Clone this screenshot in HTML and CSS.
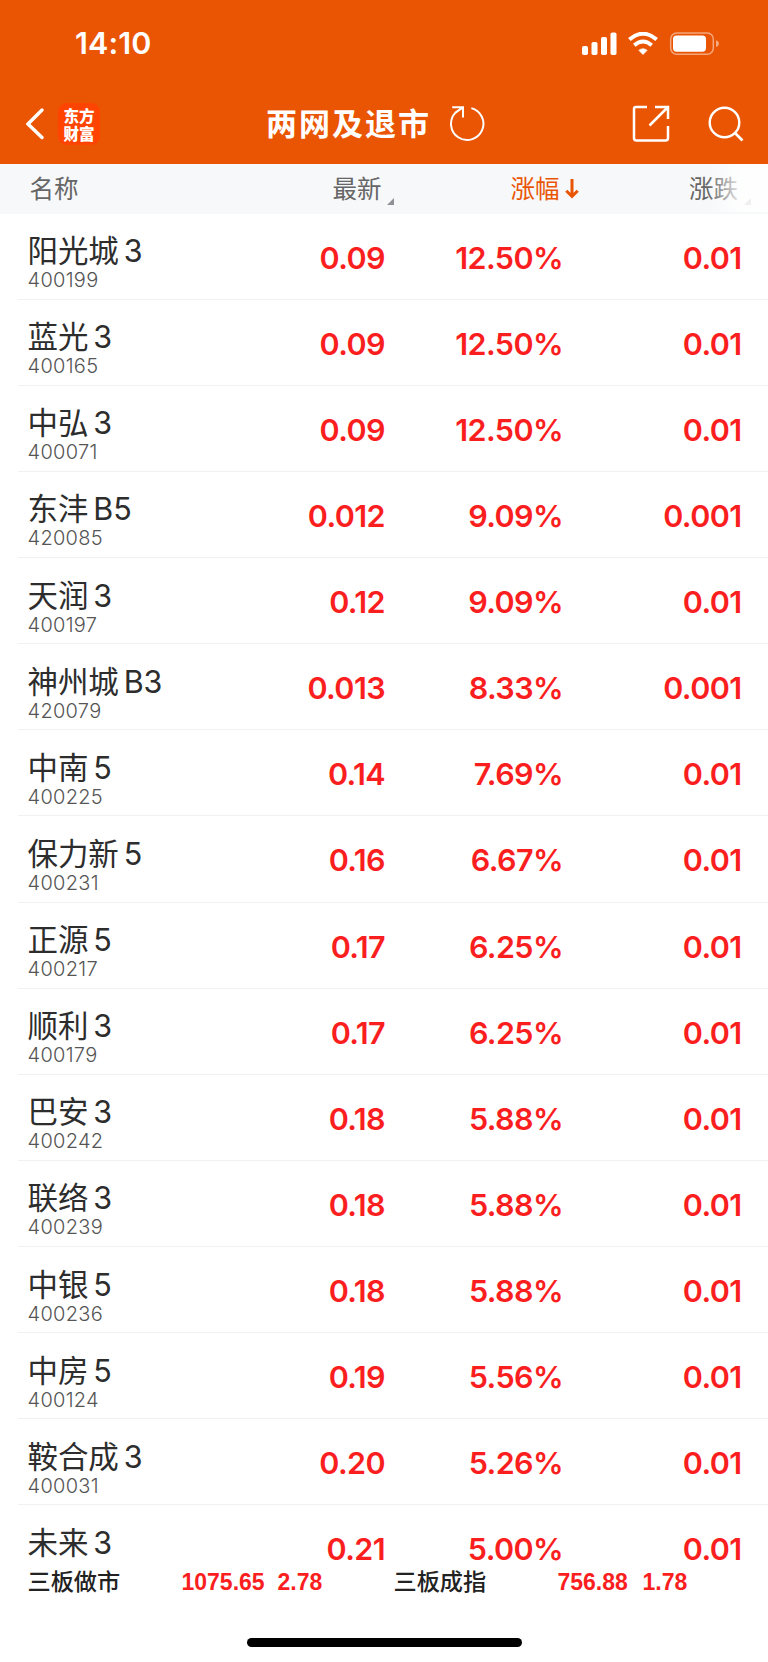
FILE: index.html
```html
<!DOCTYPE html>
<html lang="zh-CN">
<head>
  <meta charset="utf-8">
  <title>两网及退市</title>
  <link rel="stylesheet" href="styles.css">
</head>
<body>
  <div class="phone">
    <header class="top">
      <div class="status-bar">
        <span class="time">14:10</span>
        <svg class="status-icons" width="138" height="24" viewBox="0 0 138 24">
          <g fill="#fff">
            <rect x="0" y="14" width="6" height="9" rx="1.8"/>
            <rect x="9.5" y="10" width="6" height="13" rx="1.8"/>
            <rect x="19" y="5" width="6" height="18" rx="1.8"/>
            <rect x="28.5" y="0.5" width="6" height="22.5" rx="1.8"/>
            <path d="M61 22.600 L56.800 18.300 Q61 15 65.200 18.300 Z" stroke="#fff" stroke-width="0.6"/>
            <rect x="91" y="3.500" width="33" height="16.200" rx="3.600"/>
            <path d="M134 8.300 Q137 9.300 137 11.600 Q137 14 134 15 Z" opacity="0.5"/>
          </g>
          <path d="M47.400 7.600 Q61 -4.200 74.600 7.600" fill="none" stroke="#fff" stroke-width="4"/>
          <path d="M52.300 13.300 Q61 5.800 69.700 13.300" fill="none" stroke="#fff" stroke-width="3.800"/>
          <rect x="88.700" y="0.900" width="42.600" height="21.400" rx="6" fill="none" stroke="#fff" stroke-width="1.500" opacity="0.48"/>
        </svg>
      </div>
      <div class="nav">
        <svg class="back" width="18" height="32" viewBox="0 0 18 32">
          <path d="M16 2 L2 16 L16 29.500" fill="none" stroke="#fff" stroke-width="3.400" stroke-linecap="round"/>
        </svg>
        <div class="logo"><span>东方</span><span>财富</span></div>
        <h1 class="title">两网及退市</h1>
        <svg class="refresh" width="36" height="36" viewBox="0 0 36 36">
          <path d="M22.300 2.100 A16.200 16.200 0 1 1 6.500 6.600 L13.500 1.600 M3.200 1.200 H14 V11.500" fill="none" stroke="#fff" stroke-width="2"/>
        </svg>
        <svg class="share" width="38" height="38" viewBox="0 0 38 38">
          <path d="M15 2 H4 Q2 2 2 4 V33 Q2 35.500 4.500 35.500 H33.500 Q36 35.500 36 33 V21 M23 2 H36 V14 M36 2 L17.500 20.500" fill="none" stroke="#fff" stroke-width="2.500"/>
        </svg>
        <svg class="search" width="36" height="36" viewBox="0 0 36 36">
          <circle cx="16.500" cy="16.500" r="14.800" fill="none" stroke="#fff" stroke-width="2.400"/>
          <path d="M27 27 L34.500 34.500" stroke="#fff" stroke-width="2.600"/>
        </svg>
      </div>
    </header>

    <div class="grid table-head">
      <span class="head-name">名称</span>
      <span class="head-cell">最新<i class="corner"></i></span>
      <span class="head-cell active">涨幅<svg class="arrow" width="14" height="20" viewBox="0 0 14 20"><path d="M7 0 V17 M1.300 11.800 L7 17.500 L12.700 11.800" fill="none" stroke="#ea5504" stroke-width="3"/></svg></span>
      <span class="head-cell">涨跌<i class="corner"></i></span>
      <div class="fade"></div>
    </div>

    <main class="list">
      <div class="grid row"><div class="stock"><b>阳光城 3</b><small>400199</small></div><span>0.09</span><span>12.50%</span><span>0.01</span></div>
      <div class="grid row"><div class="stock"><b>蓝光 3</b><small>400165</small></div><span>0.09</span><span>12.50%</span><span>0.01</span></div>
      <div class="grid row"><div class="stock"><b>中弘 3</b><small>400071</small></div><span>0.09</span><span>12.50%</span><span>0.01</span></div>
      <div class="grid row"><div class="stock"><b>东沣 B5</b><small>420085</small></div><span>0.012</span><span>9.09%</span><span>0.001</span></div>
      <div class="grid row"><div class="stock"><b>天润 3</b><small>400197</small></div><span>0.12</span><span>9.09%</span><span>0.01</span></div>
      <div class="grid row"><div class="stock"><b>神州城 B3</b><small>420079</small></div><span>0.013</span><span>8.33%</span><span>0.001</span></div>
      <div class="grid row"><div class="stock"><b>中南 5</b><small>400225</small></div><span>0.14</span><span>7.69%</span><span>0.01</span></div>
      <div class="grid row"><div class="stock"><b>保力新 5</b><small>400231</small></div><span>0.16</span><span>6.67%</span><span>0.01</span></div>
      <div class="grid row"><div class="stock"><b>正源 5</b><small>400217</small></div><span>0.17</span><span>6.25%</span><span>0.01</span></div>
      <div class="grid row"><div class="stock"><b>顺利 3</b><small>400179</small></div><span>0.17</span><span>6.25%</span><span>0.01</span></div>
      <div class="grid row"><div class="stock"><b>巴安 3</b><small>400242</small></div><span>0.18</span><span>5.88%</span><span>0.01</span></div>
      <div class="grid row"><div class="stock"><b>联络 3</b><small>400239</small></div><span>0.18</span><span>5.88%</span><span>0.01</span></div>
      <div class="grid row"><div class="stock"><b>中银 5</b><small>400236</small></div><span>0.18</span><span>5.88%</span><span>0.01</span></div>
      <div class="grid row"><div class="stock"><b>中房 5</b><small>400124</small></div><span>0.19</span><span>5.56%</span><span>0.01</span></div>
      <div class="grid row"><div class="stock"><b>鞍合成 3</b><small>400031</small></div><span>0.20</span><span>5.26%</span><span>0.01</span></div>
      <div class="grid row last"><div class="stock"><b>未来 3</b></div><span>0.21</span><span>5.00%</span><span>0.01</span></div>
    </main>

    <footer class="bottom">
      <div class="indexes">
        <span class="index-name">三板做市</span>
        <span class="index-value">1075.65</span>
        <span class="index-change">2.78</span>
        <span class="index-name">三板成指</span>
        <span class="index-value">756.88</span>
        <span class="index-change">1.78</span>
      </div>
      <div class="home-bar"></div>
    </footer>
  </div>
</body>
</html>
```
FILE: styles.css
```css
* {
    box-sizing: border-box;
}

body {
    margin: 0;
    background: #fff;
    font-family: Inter, "Noto Sans CJK SC", sans-serif;
}

.phone {
    width: 768px;
    height: 1662px;
    overflow: hidden;
    display: flex;
    flex-direction: column;
}

.top {
    height: 163.5px;
    flex: none;
    background: #ea5504;
    color: #fff;
}

.status-bar {
    height: 84px;
    padding: 4px 48px 0 75px;
    display: flex;
    align-items: center;
    justify-content: space-between;
}

.time {
    font-size: 30.5px;
    font-weight: 600;
    line-height: 34px;
    letter-spacing: 0.1px;
    margin-top: -2px;
}

.nav {
    height: 80px;
    padding: 0 24px 0 26px;
    display: flex;
    align-items: center;
}

.nav svg {
    flex: none;
}

.logo {
    width: 42px;
    height: 42px;
    margin-left: 14px;
    border-radius: 9px;
    background: #ff4300;
    display: flex;
    flex-direction: column;
    align-items: center;
    justify-content: center;
    font: 900 15.5px/18px "Noto Sans CJK SC", sans-serif;
}

.title {
    margin: 0 0 0 166px;
    font-size: 31px;
    line-height: 40px;
    font-weight: 600;
    letter-spacing: 2px;
    white-space: nowrap;
}

.refresh {
    margin-left: 18px;
}

.share {
    margin-left: auto;
}

.search {
    margin-left: 38px;
}

.grid {
    display: grid;
    grid-template-columns: 205px 179px 178px 178.5px;
    padding-left: 0;
}

.table-head {
    position: relative;
    height: 50px;
    flex: none;
    background: #f7f8fa;
    color: #666;
    font-size: 24.5px;
    line-height: 51px;
}

.head-name {
    padding-left: 29.5px;
}

.head-cell {
    position: relative;
    text-align: right;
    padding-right: 2.5px;
}

.corner {
    position: absolute;
    right: -10px;
    bottom: 10px;
    border-left: 7px solid transparent;
    border-bottom: 7px solid #8f9196;
}

.active {
    color: #ea5504;
}

.arrow {
    position: absolute;
    right: -17px;
    top: 15px;
}

.fade {
    position: absolute;
    right: 0;
    top: 0;
    width: 60px;
    height: 48px;
    background: linear-gradient(to right, rgba(255, 255, 255, 0), rgba(255, 255, 255, 0.85) 55%);
}

.list {
    height: 1352px;
    flex: none;
}

.row {
    position: relative;
    height: 86.13px;
    align-items: center;
    color: #fa1e1e;
    font-size: 30.5px;
    font-weight: 600;
    text-align: right;
    letter-spacing: -0.6px;
}

.row::after {
    content: "";
    position: absolute;
    left: 18px;
    right: 0;
    bottom: 0;
    height: 1px;
    background: #f1f1f2;
}

.last::after {
    display: none;
}

.row > span {
    margin-right: -1px;
    padding-top: 1px;
}

.stock {
    align-self: start;
    padding: 18.6px 0 0 27.5px;
    text-align: left;
    white-space: nowrap;
    letter-spacing: 0;
}

.stock b,
.stock small {
    display: block;
    font-weight: 400;
}

.stock b {
    color: #2d2d2d;
    font-size: 30.5px;
    line-height: 38px;
    word-spacing: -3.5px;
    letter-spacing: -0.1px;
}

.stock small {
    color: #555;
    font-size: 20px;
    font-weight: 300;
    line-height: 20px;
    letter-spacing: 0.3px;
}

.bottom {
    flex: 1;
}

.indexes {
    height: 33px;
    display: grid;
    grid-template-columns: 154px 96px 116px 164px 85px 100px;
    padding-left: 27.5px;
    align-items: center;
}

.index-name {
    color: #222;
    font-size: 23.2px;
    line-height: 28px;
    font-weight: 500;
    margin-top: -1px;
}

.index-value,
.index-change {
    color: #fa1e1e;
    font: bold 23px "Liberation Sans", sans-serif;
    margin-top: 1px;
}

.home-bar {
    width: 275px;
    height: 9px;
    margin: 39px auto 0;
    border-radius: 5px;
    background: #000;
}
```
